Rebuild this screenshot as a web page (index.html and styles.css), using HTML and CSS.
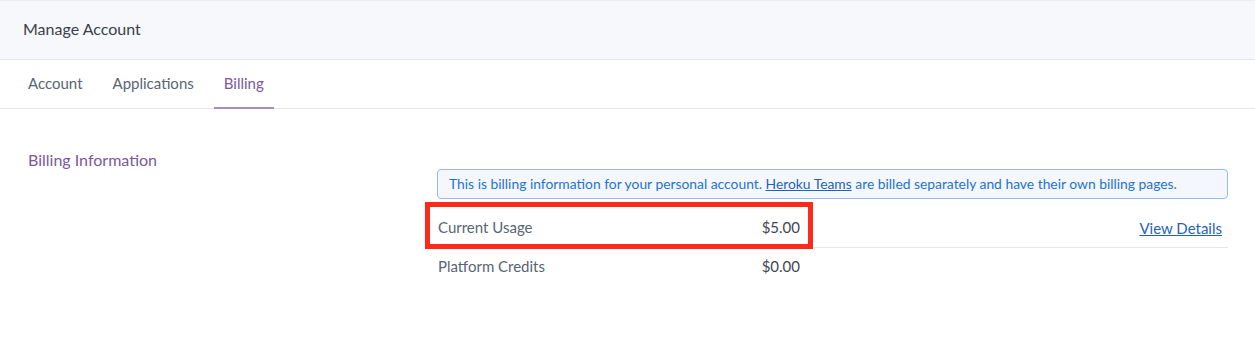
FILE: index.html
```html
<!DOCTYPE html>
<html lang="en">
<head>
    <meta charset="UTF-8">
    <title>Manage Account</title>
    <link rel="stylesheet" href="styles.css">
</head>
<body>
    <div class="page-header">
        <h1>Manage Account</h1>
    </div>

    <nav class="tabs">
        <a class="tab" href="#">Account</a>
        <a class="tab" href="#">Applications</a>
        <a class="tab active" href="#">Billing</a>
    </nav>

    <div class="section">
        <h2 class="section-title">Billing Information</h2>
        <div class="section-body">
            <div class="notice">
                This is billing information for your personal account. <a href="#">Heroku Teams</a> are billed separately and have their own billing pages.
            </div>
            <div class="billing-row">
                <span class="pair highlight">
                    <span class="label">Current Usage</span>
                    <span class="amount">$5.00</span>
                </span>
                <a class="details" href="#">View Details</a>
            </div>
            <div class="billing-row no-border">
                <span class="pair">
                    <span class="label">Platform Credits</span>
                    <span class="amount">$0.00</span>
                </span>
            </div>
        </div>
    </div>
</body>
</html>
```

FILE: styles.css
```css
body {
    margin: 0;
    font-family: Lato, "Open Sans", sans-serif;
    color: #3f4652;
    background: #fff;
}
.page-header {
    box-sizing: border-box;
    height: 60px;
    background-color: #f7f8fb;
    border-top: 1px solid #eceef2;
    border-bottom: 1px solid #e3e6ec;
    padding: 0 23px 3px;
    display: flex;
    align-items: center;
}
.page-header h1 {
    margin: 0;
    font-size: 16px;
    font-weight: normal;
    color: #3a3f4a;
}
.tabs {
    display: flex;
    gap: 10px;
    padding: 0 18px;
    height: 48px;
    border-bottom: 1px solid #e6e8ee;
}
.tab {
    display: flex;
    align-items: center;
    padding: 0 10px 2px;
    font-size: 15px;
    color: #596476;
    text-decoration: none;
    border-bottom: 2px solid transparent;
    margin-bottom: -1px;
}
.tab.active {
    color: #79589f;
    border-bottom-color: #a28ec7;
}
.section {
    display: flex;
    padding: 41px 27px 0 28px;
}
.section-title {
    width: 409px;
    flex-shrink: 0;
    margin: 0;
    font-size: 16px;
    font-weight: normal;
    color: #79589f;
}
.section-body {
    flex: 1;
    padding-top: 19px;
}
.notice {
    background-color: #f4f8fe;
    border: 1px solid #93bdf2;
    border-radius: 4px;
    padding: 6px 11px;
    font-size: 13.85px;
    color: #1f72d5;
    line-height: 16px;
}
.notice a {
    color: #1f62bf;
}
.billing-row {
    display: flex;
    align-items: center;
    justify-content: space-between;
    height: 40px;
    margin-top: 8px;
    border-bottom: 1px solid #e6e8ee;
    font-size: 15px;
}
.billing-row.no-border {
    border-bottom: none;
    margin-top: 0;
    height: 36px;
}
.pair {
    display: flex;
    justify-content: space-between;
    width: 362px;
    padding-left: 1px;
}
.pair.highlight {
    align-self: stretch;
    align-items: center;
    box-sizing: border-box;
    width: 378px;
    margin: 0 0 3px -7px;
    padding: 3px 8px 0;
    outline: 5px solid #fb2a1c;
}
.label {
    color: #596476;
}
.amount {
    color: #3f4652;
}
.details {
    color: #1f62bf;
    margin: 2px 6px 0 0;
}
```
